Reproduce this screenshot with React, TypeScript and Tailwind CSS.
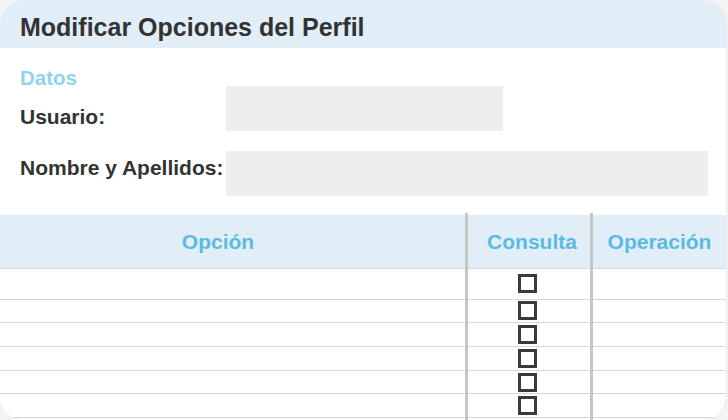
const rowHeights = ["h-[31px] pt-[5px]", "h-[23px] pt-[1px]", "h-[24px] pt-[2px]", "h-[24px] pt-[2px]", "h-[23px] pt-[2px]", "h-[24px] pt-[2px]"];

function Checkbox() {
  return <span className="block w-[19px] h-[19px] border-[3px] border-[#3a3a3a] bg-white" />;
}

export default function App() {
  return (
    <div className="w-[728px] h-[420px] bg-[#f3f3f3] font-['Liberation_Sans',Arial,sans-serif] overflow-hidden">
      <div className="w-[727px] h-[420px] bg-white rounded-[24px] border-r border-[#e8e8e8] overflow-hidden flex flex-col">
        <div className="h-[48px] bg-[#e1eef8] pl-[20px] pt-[13px]">
          <h1 className="text-[25px] leading-[28px] font-bold text-[#333333]">Modificar Opciones del Perfil</h1>
        </div>

        <div className="pl-[20px] pt-[22px]">
          <h2 className="text-[20.5px] leading-[16px] font-bold text-[#8fd3ef]">Datos</h2>
          <div className="flex items-start h-[45px]">
            <span className="w-[206px] mt-[19px] text-[21px] leading-[24px] font-bold text-[#333333]">Usuario:</span>
            <div className="w-[277px] h-[45px] bg-[#eeeeee]" />
          </div>
          <div className="flex items-start h-[45px] mt-[20px]">
            <span className="w-[206px] mt-[5px] text-[21px] leading-[24px] font-bold text-[#333333]">Nombre y Apellidos:</span>
            <div className="w-[482px] h-[45px] bg-[#eeeeee]" />
          </div>
        </div>

        <div className="flex mt-[17px] flex-1">
          <div className="w-[465px] flex flex-col pt-[2px]">
            <div className="h-[54px] bg-[#e1eef8] border-b border-[#d3dbe2] pt-[15px] pr-[29px] text-center text-[21px] leading-[24px] font-bold text-[#5bbae2]">
              Opción
            </div>
            {rowHeights.map((h, i) => (
              <div key={i} className={`${h.split(" ")[0]} border-b border-[#d6d6d6]`} />
            ))}
          </div>
          <div className="w-[125px] flex flex-col pt-[2px] border-l-[3px] border-[#c6c6c6]">
            <div className="h-[54px] bg-[#e1eef8] border-b border-[#d3dbe2] pt-[15px] pl-[6px] text-center text-[21px] leading-[24px] font-bold text-[#5bbae2]">
              Consulta
            </div>
            {rowHeights.map((h, i) => (
              <div key={i} className={`${h} pr-[3px] border-b border-[#d6d6d6] flex justify-center items-start`}>
                <Checkbox />
              </div>
            ))}
          </div>
          <div className="flex-1 flex flex-col pt-[2px] border-l-[3px] border-[#c6c6c6]">
            <div className="h-[54px] bg-[#e1eef8] border-b border-[#d3dbe2] pt-[15px] text-center text-[21px] leading-[24px] font-bold text-[#5bbae2]">
              Operación
            </div>
            {rowHeights.map((h, i) => (
              <div key={i} className={`${h.split(" ")[0]} border-b border-[#d6d6d6]`} />
            ))}
          </div>
        </div>
      </div>
    </div>
  );
}
